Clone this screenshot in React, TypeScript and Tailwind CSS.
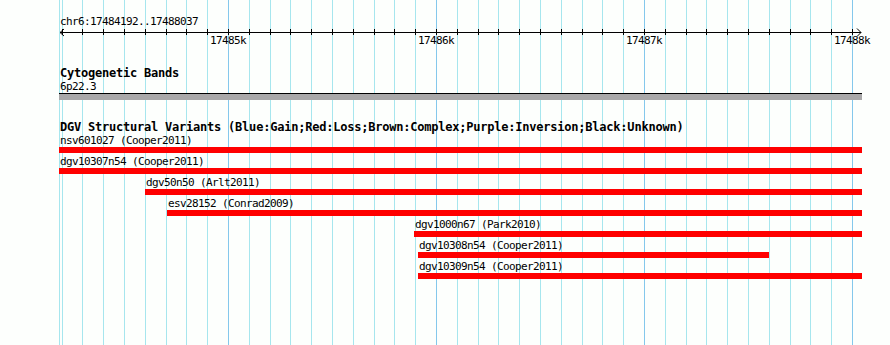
import React from 'react'

interface Feature {
  name: string
  source: string
  start: number
  end: number
}

// pixel extents of each variant on the 890px track panel
const features: Feature[] = [
  { name: 'nsv601027', source: 'Cooper2011', start: 59, end: 862 },
  { name: 'dgv10307n54', source: 'Cooper2011', start: 59, end: 862 },
  { name: 'dgv50n50', source: 'Arlt2011', start: 145, end: 862 },
  { name: 'esv28152', source: 'Conrad2009', start: 167, end: 862 },
  { name: 'dgv1000n67', source: 'Park2010', start: 414, end: 862 },
  { name: 'dgv10308n54', source: 'Cooper2011', start: 418, end: 769 },
  { name: 'dgv10309n54', source: 'Cooper2011', start: 418, end: 862 }
]

const majors = [
  { label: '17485k', x: 228 },
  { label: '17486k', x: 436 },
  { label: '17487k', x: 644 },
  { label: '17488k', x: 852 }
]

// one tick / grid line every 100bp, k = 0 is 17485k
const ticks = Array.from({ length: 39 }, (_, i) => i - 8).map(k => ({
  x: 228 + Math.round(k * 20.8),
  major: k % 10 === 0
}))

const mono = "font-['DejaVu_Sans_Mono',monospace]"

function Grid() {
  return (
    <svg className="absolute inset-0" width={890} height={345}>
      <rect x={59} y={0} width={1} height={345} fill="#a6e6ee" />
      {ticks.map(t => (
        <rect
          key={t.x}
          x={t.x}
          y={0}
          width={1}
          height={345}
          fill={t.major ? '#84c8ec' : '#a6e6ee'}
        />
      ))}
    </svg>
  )
}

function Ruler() {
  return (
    <svg width={890} height={6} className="block overflow-visible">
      <rect x={60} y={4} width={801} height={1} fill="#000" />
      {ticks.map(t => (
        <rect key={t.x} x={t.x} y={1} width={1} height={6} fill="#000" />
      ))}
      <polyline points="64,1 60,4.5 64,8" fill="none" stroke="#000" strokeWidth={1} />
      <polyline points="857,0.5 861,4.5 857,8.5" fill="none" stroke="#000" strokeWidth={1} />
    </svg>
  )
}

export default function App() {
  return (
    <div className={`relative w-[890px] h-[345px] overflow-hidden bg-[#fdfffd] text-black ${mono}`}>
      <Grid />
      <div className="relative flex flex-col pt-[15px]">
        {/* ruler */}
        <div className="h-[13px] pl-[60px] text-[11px] leading-[13px] tracking-[-0.62px]">
          chr6:17484192..17488037
        </div>
        <Ruler />
        <div className="relative h-[13px] text-[11px] leading-[13px] tracking-[-0.62px]">
          {majors.map(m => (
            <span key={m.label} className="absolute top-0" style={{ left: m.x - 18 }}>
              {m.label}
            </span>
          ))}
        </div>

        {/* cytogenetic bands */}
        <div className="mt-[20px] h-[13px] pl-[60px] text-[12px] font-bold leading-[13px] tracking-[-0.22px]">
          Cytogenetic Bands
        </div>
        <div className="h-[13px] pl-[60px] text-[11px] leading-[13px] tracking-[-0.62px]">6p22.3</div>
        <div className="ml-[59px] w-[803px] h-[7px] border-t border-black bg-[#a9a8a9]"></div>

        {/* DGV */}
        <div className="mt-[21px] h-[13px] pl-[60px] text-[12px] font-bold leading-[13px] tracking-[-0.22px] whitespace-nowrap">
          DGV Structural Variants (Blue:Gain;Red:Loss;Brown:Complex;Purple:Inversion;Black:Unknown)
        </div>
        <div className="mt-[1px] flex flex-col gap-[3px]">
          {features.map(f => (
            <div key={f.name} className="flex flex-col" style={{ paddingLeft: f.start }}>
              <div className="h-[12px] pl-[1px] text-[11px] leading-[12px] tracking-[-0.62px] whitespace-nowrap">
                {f.name} ({f.source})
              </div>
              <div className="h-[6px] bg-[#ff0000]" style={{ width: f.end - f.start }}></div>
            </div>
          ))}
        </div>
      </div>
    </div>
  )
}
